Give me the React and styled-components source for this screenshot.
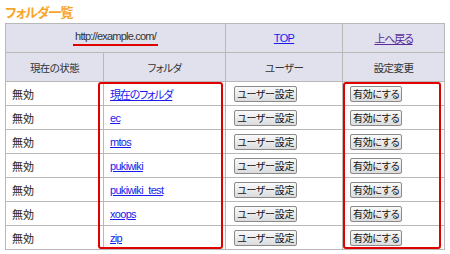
import styled, { createGlobalStyle } from "styled-components";

const GlobalStyle = createGlobalStyle`
	body {
		margin: 0;
		padding: 0 5px;
		background: #fff;
		font-family: "Liberation Sans", "Noto Sans CJK JP", sans-serif;
		font-size: 11px;
		font-feature-settings: "palt";
		color: #222;
	}
`;

const Title = styled.h2`
	margin: 0;
	padding-top: 4px;
	height: 19px;
	font-family: "Noto Sans CJK JP", sans-serif;
	font-size: 13px;
	font-weight: bold;
	letter-spacing: -1px;
	color: #f7a52a;
	line-height: 15px;
`;

const Wrap = styled.div`
	position: relative;
	width: 439px;
`;

const Table = styled.table`
	width: 439px;
	border-collapse: collapse;
	border: 1px solid #b8b8b8;
	table-layout: fixed;
`;

const Head = styled.th`
	height: 28px;
	padding: 0;
	background: #e0e1ed;
	border: 1px solid #b8b8b8;
	font-weight: normal;
	font-size: 10.5px;
	letter-spacing: -0.6px;
	text-align: center;
	color: #333;
`;

const Cell = styled.td`
	height: 23px;
	padding: 0 0 0 ${(p) => p.$pad || 6}px;
	border: 1px solid #b8b8b8;
	font-size: 11px;
	text-align: left;
	vertical-align: middle;
`;

const Link = styled.a`
	font-size: 11px;
	letter-spacing: ${(p) => (p.$jp ? -1.2 : -0.7)}px;
	color: ${(p) => (p.$visited ? "#5b2b9b" : "#1a1aee")};
	text-decoration: underline;
`;

const Url = styled.span`
	display: inline-block;
	padding: 0 2px 2px;
	font-size: 11px;
	letter-spacing: -0.8px;
	border-bottom: 2px solid #e00000;
	color: #333;
`;

const Button = styled.button`
	height: 16px;
	padding: 0 2px;
	margin: 0;
	font-family: "Noto Sans CJK JP", sans-serif;
	font-feature-settings: "palt";
	font-size: 10px;
	letter-spacing: -0.3px;
	line-height: 14px;
	color: #111;
	background: linear-gradient(#fafafa, #dcdcdc);
	border: 1px solid #8a8a8a;
	border-radius: 2px;
	vertical-align: middle;
`;

const Mark = styled.div`
	position: absolute;
	top: 59px;
	height: 163px;
	left: ${(p) => p.$left}px;
	width: ${(p) => p.$width}px;
	border: 2px solid #e00000;
	border-radius: 3px;
	pointer-events: none;
`;

const folders = ["現在のフォルダ", "ec", "mtos", "pukiwiki", "pukiwiki_test", "xoops", "zip"];

export default function App() {
	return (
		<>
			<GlobalStyle />
			<Title>フォルダ一覧</Title>
			<Wrap>
				<Table>
					<colgroup>
						<col style={{ width: 98 }} />
						<col style={{ width: 122 }} />
						<col style={{ width: 117 }} />
						<col style={{ width: 102 }} />
					</colgroup>
					<thead>
						<tr>
							<Head colSpan={2}>
								<Url>http://example.com/</Url>
							</Head>
							<Head>
								<Link href="#">TOP</Link>
							</Head>
							<Head>
								<Link href="#" $visited $jp>上へ戻る</Link>
							</Head>
						</tr>
						<tr>
							<Head>現在の状態</Head>
							<Head>フォルダ</Head>
							<Head>ユーザー</Head>
							<Head>設定変更</Head>
						</tr>
					</thead>
					<tbody>
						{folders.map((name, i) => (
							<tr key={name}>
								<Cell>無効</Cell>
								<Cell $pad={6}>
									<Link href="#" $jp={i === 0}>{name}</Link>
								</Cell>
								<Cell $pad={8}>
									<Button>ユーザー設定</Button>
								</Cell>
								<Cell $pad={7}>
									<Button>有効にする</Button>
								</Cell>
							</tr>
						))}
					</tbody>
				</Table>
				<Mark $left={93} $width={121} />
				<Mark $left={338} $width={94} />
			</Wrap>
		</>
	);
}
